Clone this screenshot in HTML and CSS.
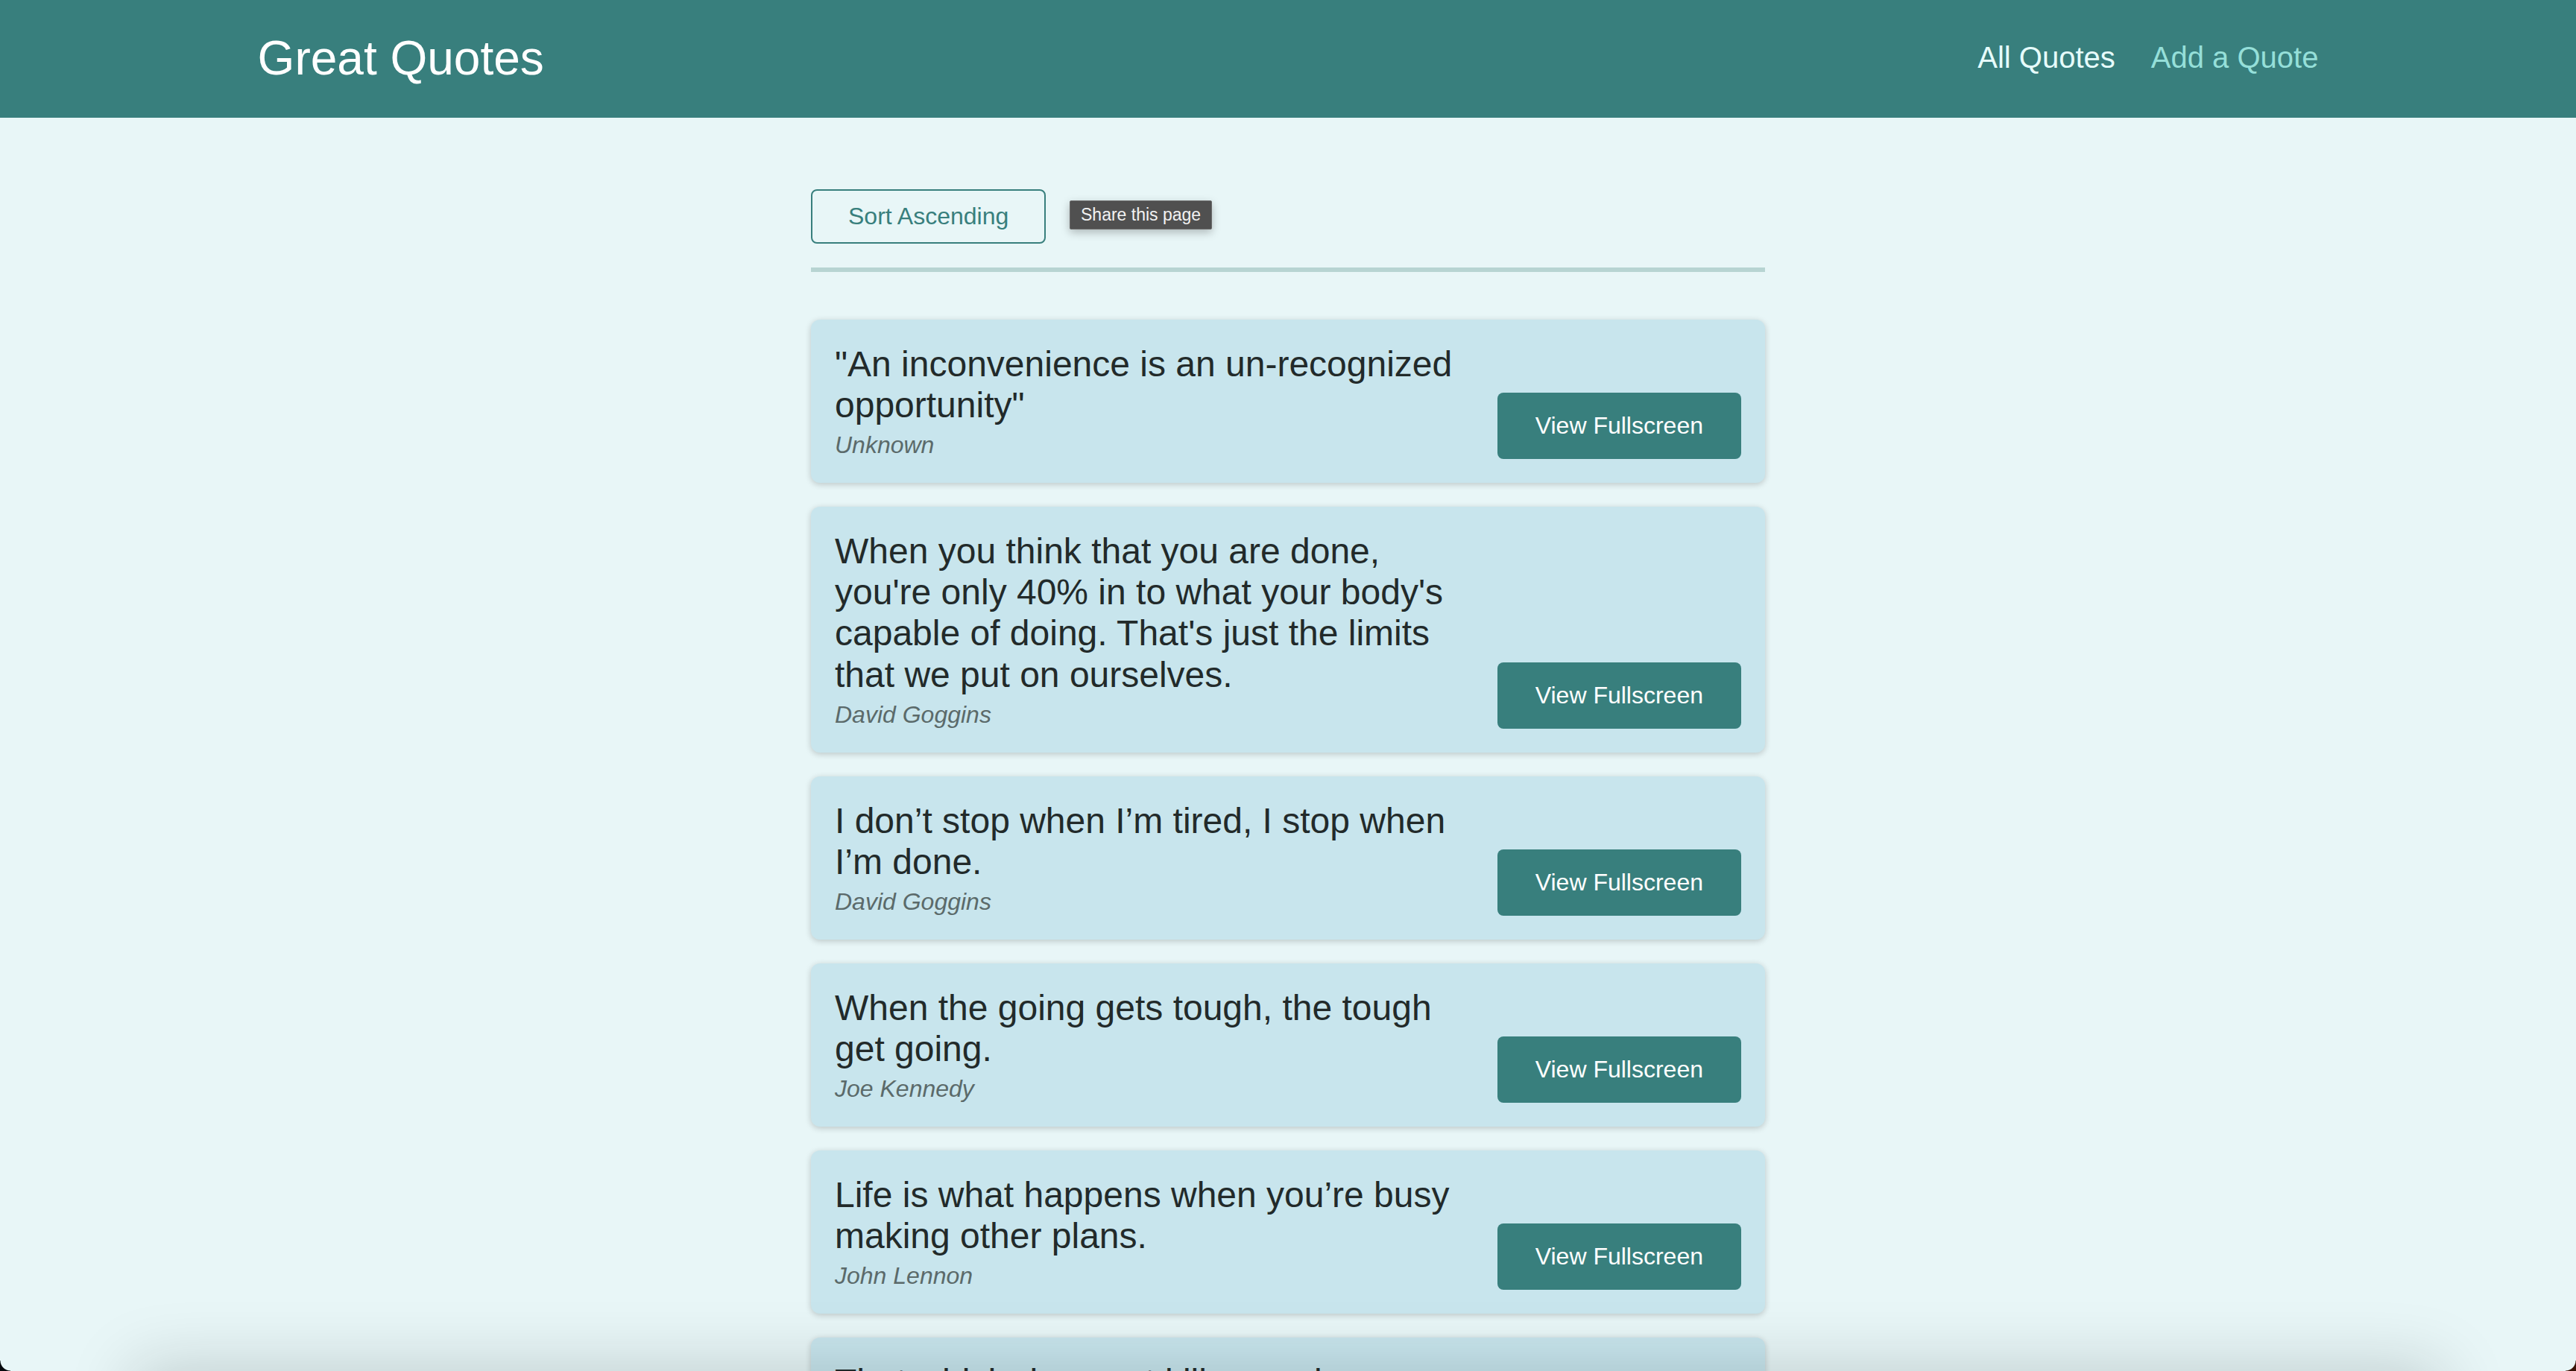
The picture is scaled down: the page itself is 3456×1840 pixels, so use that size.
FILE: index.html
```html
<!DOCTYPE html>
<html lang="en">
<head>
<meta charset="utf-8">
<title>Great Quotes</title>
<link rel="stylesheet" href="styles.css">
</head>
<body>
<header class="header">
  <div class="logo">Great Quotes</div>
  <nav class="nav">
    <a class="nav-link nav-link--active" href="#">All Quotes</a>
    <a class="nav-link" href="#">Add a Quote</a>
  </nav>
</header>
<main class="main">
  <div class="sorting">
    <button class="sort-btn">Sort Ascending</button>
    <div class="tooltip">Share this page</div>
  </div>
  <ul class="quote-list">
    <li class="quote-item">
      <figure class="quote">
        <blockquote class="quote-text">"An inconvenience is an un-recognized opportunity"</blockquote>
        <figcaption class="quote-author">Unknown</figcaption>
      </figure>
      <a class="btn" href="#">View Fullscreen</a>
    </li>
    <li class="quote-item">
      <figure class="quote">
        <blockquote class="quote-text">When you think that you are done, you're only 40% in to what your body's capable of doing. That's just the limits that we put on ourselves.</blockquote>
        <figcaption class="quote-author">David Goggins</figcaption>
      </figure>
      <a class="btn" href="#">View Fullscreen</a>
    </li>
    <li class="quote-item">
      <figure class="quote">
        <blockquote class="quote-text">I don’t stop when I’m tired, I stop when I’m done.</blockquote>
        <figcaption class="quote-author">David Goggins</figcaption>
      </figure>
      <a class="btn" href="#">View Fullscreen</a>
    </li>
    <li class="quote-item">
      <figure class="quote">
        <blockquote class="quote-text">When the going gets tough, the tough get going.</blockquote>
        <figcaption class="quote-author">Joe Kennedy</figcaption>
      </figure>
      <a class="btn" href="#">View Fullscreen</a>
    </li>
    <li class="quote-item">
      <figure class="quote">
        <blockquote class="quote-text">Life is what happens when you’re busy making other plans.</blockquote>
        <figcaption class="quote-author">John Lennon</figcaption>
      </figure>
      <a class="btn" href="#">View Fullscreen</a>
    </li>
    <li class="quote-item">
      <figure class="quote">
        <blockquote class="quote-text">That which does not kill us makes us stronger.</blockquote>
        <figcaption class="quote-author">Friedrich Nietzsche</figcaption>
      </figure>
      <a class="btn" href="#">View Fullscreen</a>
    </li>
  </ul>
</main>
<div class="bottom-shadow"></div>
<div class="corner corner--left"></div>
<div class="corner corner--right"></div>
</body>
</html>
```
FILE: styles.css
```css
* {
  box-sizing: border-box;
}

html, body {
  margin: 0;
  padding: 0;
}

body {
  background: #e8f6f7;
  font-family: "Liberation Sans", Arial, Helvetica, sans-serif;
  color: #222a2a;
  overflow: hidden;
  height: 1840px;
}

.header {
  height: 158px;
  background: #387f7d;
  padding: 0 10%;
  display: flex;
  align-items: center;
  justify-content: space-between;
}

.logo {
  color: #ffffff;
  font-size: 64px;
  line-height: 1.15;
}

.nav {
  display: flex;
  gap: 48px;
  padding-bottom: 4px;
}

.nav-link {
  color: #95dfd9;
  font-size: 40px;
  text-decoration: none;
  line-height: 1.15;
}

.nav-link--active {
  color: #e6fcfb;
}

.main {
  width: 1280px;
  margin: 96px auto 0;
}

.sorting {
  position: relative;
  padding-bottom: 32px;
  border-bottom: 6px solid #b7d4d2;
}

.sort-btn {
  font-family: inherit;
  font-size: 32px;
  line-height: 1.15;
  color: #387f7d;
  background: transparent;
  border: 2px solid #387f7d;
  border-radius: 8px;
  padding: 16px 48px;
  cursor: pointer;
  display: block;
}

.tooltip {
  position: absolute;
  left: 347px;
  top: 15px;
  height: 39px;
  padding: 0 14px;
  display: flex;
  align-items: center;
  background: #505050;
  border: 1px solid #6b6b6b;
  color: #f2f2f2;
  font-size: 23px;
  border-radius: 2px;
  box-shadow: 0 4px 12px rgba(0, 0, 0, 0.25);
}

.quote-list {
  list-style: none;
  margin: 64px 0 0;
  padding: 0;
  display: flex;
  flex-direction: column;
  gap: 32px;
}

.quote-item {
  background: #c8e5ed;
  border-radius: 12px;
  padding: 32px;
  display: flex;
  align-items: flex-end;
  justify-content: space-between;
  gap: 32px;
  box-shadow: 0 2px 8px rgba(0, 0, 0, 0.2);
}

.quote {
  margin: 0;
  flex: 1;
}

.quote-text {
  margin: 0;
  font-size: 48px;
  line-height: 1.15;
  color: #222a2a;
}

.quote-author {
  margin-top: 8px;
  font-size: 32px;
  line-height: 1.15;
  font-style: italic;
  color: #5b6a6a;
}

.btn {
  flex: none;
  background: #387f7d;
  color: #ffffff;
  font-size: 32px;
  line-height: 1.15;
  text-decoration: none;
  padding: 26px 51px;
  border-radius: 8px;
}

.bottom-shadow {
  position: fixed;
  left: 240px;
  right: 240px;
  bottom: -95px;
  height: 40px;
  box-shadow: 0 0 90px 60px rgba(0, 20, 20, 0.18);
  pointer-events: none;
}

.corner {
  position: fixed;
  bottom: 0;
  width: 14px;
  height: 14px;
  pointer-events: none;
}

.corner--left {
  left: 0;
  background: radial-gradient(circle at 100% 0, transparent 13px, #05080c 14px);
}

.corner--right {
  right: 0;
  background: radial-gradient(circle at 0 0, transparent 13px, #3a1408 14px);
}
```
